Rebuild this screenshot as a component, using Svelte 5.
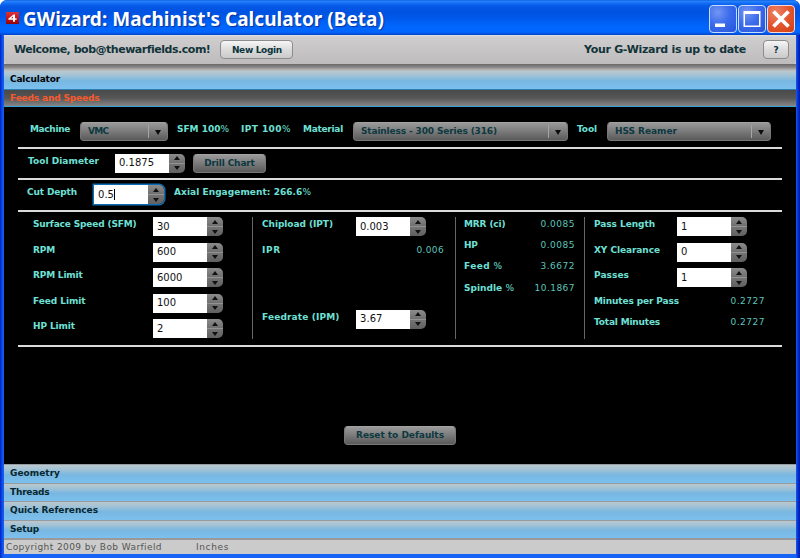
<script>
  // Spreads the letters of a label over the width given in px.
  function fit(node, width) {
    const apply = () => {
      node.style.letterSpacing = '0px';
      const natural = node.getBoundingClientRect().width;
      const n = node.textContent.trim().length;
      node.style.letterSpacing = (width - natural) / n + 'px';
    };
    apply();
    document.fonts?.ready.then(apply);
  }

  const speeds = [
    ['Surface Speed (SFM)', 103.5, '30', 12.5],
    ['RPM', 22, '600', 19],
    ['RPM Limit', 49.5, '6000', 25.5],
    ['Feed Limit', 52.5, '100', 19],
    ['HP Limit', 42, '2', 6],
  ];
  const results = [
    ['MRR (ci)', '', 41.5, '0.0085', 34.5],
    ['HP', '', 13.5, '0.0085', 34.5],
    ['Feed ', '%', 38.5, '3.6672', 34.5],
    ['Spindle ', '%', 50, '10.1867', 40.5],
  ];
  const passes = [
    ['Pass Length', 61, '1', 6],
    ['XY Clearance', 66, '0', 6],
    ['Passes', 35, '1', 6],
  ];
  const sections = [['Geometry', 50], ['Threads', 39.5], ['Quick References', 88], ['Setup', 29]];
</script>

{#snippet label(text, w, pct = '')}
  <span class="label" use:fit={w}>{text}{#if pct}<i>{pct}</i>{/if}</span>
{/snippet}

{#snippet combo(text, w, cls)}
  <div class="combo {cls}">
    <span class="ctext"><span class="t" use:fit={w}>{text}</span></span>
    <span class="drop"><svg width="6" height="5" viewBox="0 0 6 5"><path d="M0 0H6L3 5Z" fill="#0d0d0d" /></svg></span>
  </div>
{/snippet}

{#snippet stepper(value, w, focused = false)}
  <div class="stepper" class:focused>
    <div class="field"><span class="t" use:fit={w}>{value}</span>{#if focused}<span class="caret"></span>{/if}</div>
    <div class="arrows">
      <span><svg width="6" height="4" viewBox="0 0 6 4"><path d="M0 4H6L3 0Z" fill="#111" /></svg></span>
      <span><svg width="6" height="4" viewBox="0 0 6 4"><path d="M0 0H6L3 4Z" fill="#111" /></svg></span>
    </div>
  </div>
{/snippet}

<div class="window">
  <header class="titlebar">
    <svg class="logo" width="13" height="12" viewBox="0 0 13 12">
      <defs><linearGradient id="lg" x1="0" y1="0" x2="0" y2="1"><stop offset="0" stop-color="#d8343a" /><stop offset="0.5" stop-color="#c8141a" /><stop offset="1" stop-color="#8c0509" /></linearGradient></defs>
      <rect width="13" height="12" fill="url(#lg)" />
      <path d="M7.6 2.4H9V6.2H10.6V7.8H9V9.8H7V7.8H2.4V6.4ZM7 4.5L5 6.2H7Z" fill="#fff" fill-rule="evenodd" />
    </svg>
    <h1><span class="t" use:fit={361}>GWizard: Machinist's Calculator (Beta)</span></h1>
    <div class="winbtns">
      <button class="wb" aria-label="Minimize"><svg width="26" height="26" viewBox="0 0 26 26"><rect x="5" y="17.5" width="10" height="3.5" fill="#fff" /></svg></button>
      <button class="wb" aria-label="Maximize"><svg width="26" height="26" viewBox="0 0 26 26"><path d="M4.5 5H21.5V21H4.5ZM6 8V19.5H20V8Z" fill="#fff" fill-rule="evenodd" /></svg></button>
      <button class="wb close" aria-label="Close"><svg width="26" height="26" viewBox="0 0 26 26"><path d="M5.5 5.5L20.5 20.5M20.5 5.5L5.5 20.5" stroke="#fff" stroke-width="3.8" /></svg></button>
    </div>
  </header>

  <div class="client">
    <div class="topbar">
      <span class="welcome" use:fit={196}>Welcome, bob@thewarfields.com!</span>
      <button class="lbtn login"><span class="t" use:fit={50}>New Login</span></button>
      <span class="grow"></span>
      <span class="welcome" use:fit={162}>Your G-Wizard is up to date</span>
      <button class="lbtn help">?</button>
    </div>
    <div class="shadow"></div>

    <div class="acc first"><span class="t" use:fit={50}>Calculator</span></div>
    <div class="acc open"><span class="t" use:fit={89.5}>Feeds and Speeds</span></div>

    <main>
      <div class="row r1">
        {@render label('Machine', 40)}
        {@render combo('VMC', 20.5, 'machine')}
        {@render label('SFM 100', 52, '%')}
        <span class="g3"></span>
        {@render label('IPT 100', 50, '%')}
        <span class="g2"></span>
        {@render label('Material', 40)}
        {@render combo('Stainless - 300 Series (316)', 136, 'material')}
        {@render label('Tool', 20)}
        {@render combo('HSS Reamer', 62, 'tool')}
      </div>
      <div class="row r2">
        <div class="c87">{@render label('Tool Diameter', 71)}</div>
        {@render stepper('0.1875', 35)}
        <button class="dbtn drill"><span class="t" use:fit={50.5}>Drill Chart</span></button>
      </div>
      <div class="row r3">
        <div class="c67">{@render label('Cut Depth', 50)}</div>
        {@render stepper('0.5', 16, true)}
        <div class="axial">{@render label('Axial Engagement: 266.6', 137, '%')}</div>
      </div>
      <div class="grid">
        <div class="col col1">
          {#each speeds as [name, w, value, vw]}
            <div class="line">{@render label(name, w)}{@render stepper(value, vw)}</div>
          {/each}
        </div>
        <div class="col col2">
          <div class="line">{@render label('Chipload (IPT)', 71)}{@render stepper('0.003', 28.5)}</div>
          <div class="line out">{@render label('IPR', 19)}<span class="value" use:fit={27.5}>0.006</span></div>
          <div class="line feed">{@render label('Feedrate (IPM)', 77.5)}{@render stepper('3.67', 22.5)}</div>
        </div>
        <div class="col col3">
          {#each results as [name, pct, w, value, vw]}
            <div class="line short">{@render label(name, w, pct)}<span class="value" use:fit={vw}>{value}</span></div>
          {/each}
        </div>
        <div class="col col4">
          {#each passes as [name, w, value, vw]}
            <div class="line">{@render label(name, w)}{@render stepper(value, vw)}</div>
          {/each}
          <div class="line short out">{@render label('Minutes per Pass', 85)}<span class="value" use:fit={34.5}>0.2727</span></div>
          <div class="line short out">{@render label('Total Minutes', 66)}<span class="value" use:fit={34.5}>0.2727</span></div>
        </div>
      </div>
      <div class="reset"><button class="dbtn"><span class="t" use:fit={88}>Reset to Defaults</span></button></div>
    </main>

    {#each sections as [name, w]}
      <div class="acc"><span class="t" use:fit={w}>{name}</span></div>
    {/each}
    <footer>
      <span class="copy"><span class="t" use:fit={156}>Copyright 2009 by Bob Warfield</span></span>
      <span class="t" use:fit={33}>Inches</span>
    </footer>
  </div>
</div>

<style>
  :global(body) { margin: 0; background: #fff; overflow: hidden; }
  * { box-sizing: border-box; }
  .window {
    width: 800px; height: 558px; display: flex; flex-direction: column;
    border-radius: 7px 7px 0 0; overflow: hidden;
    background: linear-gradient(90deg, #0020c4 0, #0a4be8 2px, #1663f4 4px, #1663f4 796px, #0a3fe0 797px, #0018a8 800px);
    font: bold 9px/15px "DejaVu Sans", Verdana, sans-serif;
  }
  button { font: inherit; margin: 0; padding: 0; }
  .t, .label, .value, .welcome { display: inline-block; white-space: pre; flex: none; }

  .titlebar {
    height: 35px; flex: none; display: flex; padding: 5px 5px 0 6px;
    background: linear-gradient(#0a55d8 0, #2a86fa 1px, #1470f6 3px, #0658e6 6px, #0053e0 12px, #0058ea 18px, #0066fd 26px, #0066ff 32px, #0050dc 34px, #0342c0 35px);
  }
  .logo { margin-top: 7px; }
  h1 {
    margin: 0 0 0 4px; flex: 1; color: #fff; font: bold 19px/29px "Noto Sans", "Trebuchet MS", sans-serif;
    text-shadow: 1px 1px 1px #0a2f9a;
  }
  .winbtns { display: flex; gap: 1px; }
  .wb {
    width: 28px; height: 28px; border: 1px solid #c8dcff; border-radius: 4px; display: flex; align-items: center; justify-content: center;
    background: radial-gradient(circle at 30% 25%, #7396f2 0, #3c6cec 45%, #2554dc 100%);
  }
  .wb svg { flex: none; }
  .close { background: radial-gradient(circle at 30% 25%, #ec8468 0, #e4552f 50%, #d0400f 100%); border-color: #ffd9d0; }

  .client { width: 792px; height: 519px; margin-left: 4px; display: flex; flex-direction: column; background: #cbcbcb; }
  .topbar {
    height: 29px; flex: none; display: flex; align-items: center; padding: 0 7px 0 10px; border-radius: 0 0 4px 4px;
    background: linear-gradient(#e2e2e2 0, #cfcdcd 2px, #c0bebe 25px, #bdbbbb);
  }
  .welcome { color: #12333a; font-size: 11px; line-height: 29px; }
  .grow { flex: 1; }
  .lbtn {
    height: 19px; border: 1px solid #8c8c8c; border-radius: 4px; color: #0b333c;
    background: linear-gradient(#f6f6f6, #dcdcdc 50%, #cacaca); line-height: 16px;
  }
  .login { width: 73px; margin-left: 10px; }
  .help { width: 26px; margin-left: 17px; }
  .shadow { height: 6px; flex: none; background: linear-gradient(#686666, #8a8888 55%, #b9b9b9); }

  .acc {
    height: 18.5px; flex: none; padding-left: 6px; color: #06272f; line-height: 17px;
    border-top: 1px solid #959b9e; background: linear-gradient(#bac8cf 0, #a8c4d4 20%, #78b7e1 55%, #7cc0ef 100%);
  }
  .acc.first { height: 19px; border-top-color: #b9bcbd; color: #000; }
  .acc.open {
    height: 18px; color: #f8592c; border-top: 1px solid #2f7fae; border-bottom: 1px solid #36a0dc;
    background: linear-gradient(#4a4a4a, #565656 50%, #868686); line-height: 16px;
  }

  main { height: 357px; flex: none; background: #000; padding: 1px 14px 0 14px; }
  .row { display: flex; align-items: flex-start; border-bottom: 2px solid #dadada; padding-top: 5px; }
  .r1 { height: 40.5px; padding: 14px 0 0 12px; }
  .r2 { height: 31.5px; padding-left: 10px; }
  .r3 { height: 32px; padding-left: 9px; }
  .label { color: #6fe0d6; }
  .label i { font-style: normal; font-weight: normal; }
  .value { color: #5cc4bb; font-weight: normal; }
  .g3 { width: 12px; }
  .g2 { width: 12px; }
  .c87 { width: 87px; }
  .c67 { width: 67px; }
  .axial { margin-left: 10px; }

  .combo {
    height: 19px; display: flex; flex: none; margin: 0 9px 0 10px; border-radius: 4px; color: #0c3840;
    border: 1px solid #777; border-top-color: #a2a2a2; background: linear-gradient(#999, #7a7a7a 50%, #5a5a5a);
  }
  .ctext { flex: 1; padding-left: 7px; line-height: 17px; }
  .drop { width: 19px; margin: 2px 0; border-left: 1px solid #a6a6a6; display: flex; align-items: center; justify-content: center; padding-top: 1px; }
  .machine { width: 88px; }
  .material { width: 215px; }
  .tool { width: 164px; }

  .stepper { width: 70px; height: 19px; display: flex; flex: none; border-radius: 0 5px 5px 0; }
  .field {
    width: 54px; background: #fff; color: #111; padding-left: 4px; font-weight: normal; line-height: 18px; font-size: 10px;
    display: flex; align-items: center;
  }
  .caret { width: 1px; height: 11px; background: #000; }
  .arrows { flex: 1; display: flex; flex-direction: column; border-radius: 0 5px 5px 0; overflow: hidden; }
  .arrows span { flex: 1; display: flex; align-items: center; justify-content: center; background: linear-gradient(#8c8c8c, #6f6f6f); }
  .arrows span + span { border-top: 1px solid #929292; background: linear-gradient(#747474, #606060); }
  .focused { box-shadow: 0 0 0 1.5px #0d6cb4; }

  .dbtn {
    height: 19px; border: 1px solid #777; border-top-color: #a2a2a2; border-radius: 4px; color: #0c3840;
    background: linear-gradient(#9a9a9a, #7a7a7a 50%, #5a5a5a); line-height: 17px;
  }
  .drill { width: 73px; margin-left: 8px; }

  .grid { display: flex; height: 135px; padding-top: 5px; border-bottom: 2px solid #dadada; }
  .col { height: 122px; flex: none; border-right: 1px solid #666; }
  .col1 { width: 235px; padding: 0 29px 0 15px; }
  .col2 { width: 203px; padding: 0 29px 0 9px; }
  .col3 { width: 129px; padding: 0 9px 0 8px; }
  .col4 { width: 171px; padding: 0 9px 0 9px; border: 0; }
  .line { display: flex; justify-content: space-between; height: 25.6px; align-items: flex-start; }
  .short { height: 21.2px; }
  .out { margin-right: -18px; }
  .feed { margin-top: 41.5px; }
  .reset { display: flex; justify-content: center; padding-top: 79px; }
  .reset .dbtn { width: 112px; }

  footer {
    flex: 1; display: flex; padding-left: 2px; color: #555; font-weight: normal; line-height: 14px;
    border-top: 2px solid #999; background: #cbcbcb;
  }
  .copy { width: 190px; }
</style>
